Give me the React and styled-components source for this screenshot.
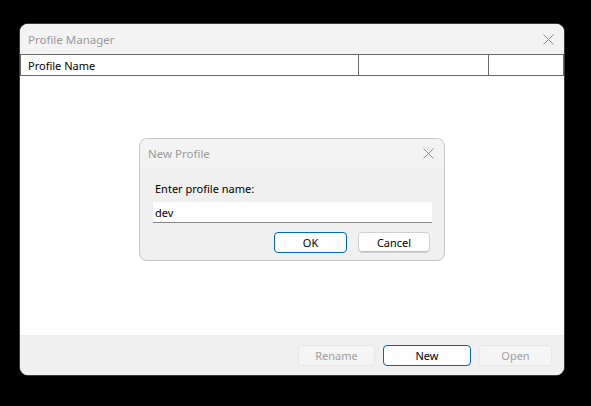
import React from 'react';
import styled, { createGlobalStyle } from 'styled-components';

const GlobalStyle = createGlobalStyle`
  html, body {
    margin: 0;
    padding: 0;
    background: #000;
  }
  body {
    font-family: "Noto Sans", "Liberation Sans", sans-serif;
    font-size: 11px;
  }
`;

function CloseIcon() {
  return (
    <svg width="11" height="11" viewBox="0 0 11 11" aria-hidden="true">
      <path d="M0.5 0.5 L10.5 10.5 M10.5 0.5 L0.5 10.5" stroke="#8c8c8c" strokeWidth="1" fill="none" />
    </svg>
  );
}

const columns = [
  { title: 'Profile Name', width: 338 },
  { title: '', width: 130 },
  { title: '', width: 75 },
];

function App() {
  return (
    <>
      <GlobalStyle />
      <Page>
        <Window>
          <TitleBar>
            <Title>Profile Manager</Title>
            <CloseButton>
              <CloseIcon />
            </CloseButton>
          </TitleBar>
          <HeaderRow>
            {columns.map((col, i) => (
              <HeaderCell key={i} width={col.width}>
                {col.title}
              </HeaderCell>
            ))}
          </HeaderRow>
          <ListArea />
          <BottomBar>
            <Button disabled width={77}>Rename</Button>
            <Button primary width={88}>New</Button>
            <Button disabled width={73}>Open</Button>
          </BottomBar>

          <Dialog>
            <DialogTitleBar>
              <Title>New Profile</Title>
              <CloseButton>
                <CloseIcon />
              </CloseButton>
            </DialogTitleBar>
            <DialogBody>
              <Label>Enter profile name:</Label>
              <TextInput defaultValue="dev" />
              <DialogButtons>
                <Button primary width={73}>OK</Button>
                <Button width={72}>Cancel</Button>
              </DialogButtons>
            </DialogBody>
          </Dialog>
        </Window>
      </Page>
    </>
  );
}

const Page = styled.div`
  width: 591px;
  height: 406px;
  padding: 24px 0 0 20px;
  box-sizing: border-box;
`;

const Window = styled.div`
  position: relative;
  width: 544px;
  height: 351px;
  display: flex;
  flex-direction: column;
  background: #ffffff;
  border-radius: 8px;
  overflow: hidden;
  box-shadow: 0 0 0 1px #3a3a3a;
`;

const TitleBar = styled.div`
  height: 30px;
  flex-shrink: 0;
  display: flex;
  align-items: center;
  justify-content: space-between;
  padding: 0 10px 0 8px;
  background: #f3f3f3;
`;

const Title = styled.span`
  color: #9a9a9a;
  font-size: 11.5px;
`;

const CloseButton = styled.span`
  display: flex;
  align-items: center;
  justify-content: center;
  width: 11px;
  height: 11px;
`;

const HeaderRow = styled.div`
  height: 22px;
  flex-shrink: 0;
  display: flex;
  box-sizing: border-box;
  border-top: 1px solid #6a6a6a;
  border-bottom: 1px solid #6a6a6a;
  border-left: 1px solid #6a6a6a;
  background: #ffffff;
`;

const HeaderCell = styled.div`
  width: ${(p) => p.width}px;
  box-sizing: border-box;
  border-right: 1px solid #6a6a6a;
  padding-left: 7px;
  display: flex;
  align-items: center;
  color: #000;
`;

const ListArea = styled.div`
  flex: 1;
  background: #ffffff;
`;

const BottomBar = styled.div`
  height: 40px;
  flex-shrink: 0;
  display: flex;
  align-items: center;
  justify-content: flex-end;
  gap: 8px;
  padding: 0 12px 0 0;
  background: #f0f0f0;
`;

const Button = styled.button`
  width: ${(p) => p.width}px;
  height: 21px;
  box-sizing: border-box;
  padding: 0;
  font-family: inherit;
  font-size: 11px;
  border-radius: 4px;
  background: ${(p) => (p.disabled ? '#f5f5f5' : '#fdfdfd')};
  color: ${(p) => (p.disabled ? '#a0a0a0' : '#000')};
  border: 1px solid
    ${(p) => (p.primary ? '#0067c0' : p.disabled ? '#e6e6e6' : '#d0d0d0')};
  box-shadow: ${(p) => (p.primary || p.disabled ? 'none' : 'inset 0 -1px 0 #c0c0c0')};
`;

const Dialog = styled.div`
  position: absolute;
  left: 119px;
  top: 114px;
  width: 306px;
  height: 123px;
  box-sizing: border-box;
  display: flex;
  flex-direction: column;
  border: 1px solid #c6c6c6;
  border-radius: 8px;
  overflow: hidden;
  background: #f0f0f0;
`;

const DialogTitleBar = styled.div`
  height: 29px;
  flex-shrink: 0;
  display: flex;
  align-items: center;
  justify-content: space-between;
  padding: 0 10px 0 8px;
  background: #f3f3f3;
`;

const DialogBody = styled.div`
  flex: 1;
  display: flex;
  flex-direction: column;
  padding: 13px 12px 0 13px;
`;

const Label = styled.label`
  line-height: 16px;
  color: #000;
  padding-left: 2px;
`;

const TextInput = styled.input`
  margin-top: 5px;
  height: 21px;
  box-sizing: border-box;
  width: 100%;
  border: none;
  border-bottom: 1px solid #858585;
  background: #ffffff;
  padding: 0 2px;
  font-family: inherit;
  font-size: 11px;
  color: #000;
  outline: none;
`;

const DialogButtons = styled.div`
  margin-top: 9px;
  display: flex;
  justify-content: flex-end;
  gap: 11px;
  padding-right: 2px;
`;

export default App;
